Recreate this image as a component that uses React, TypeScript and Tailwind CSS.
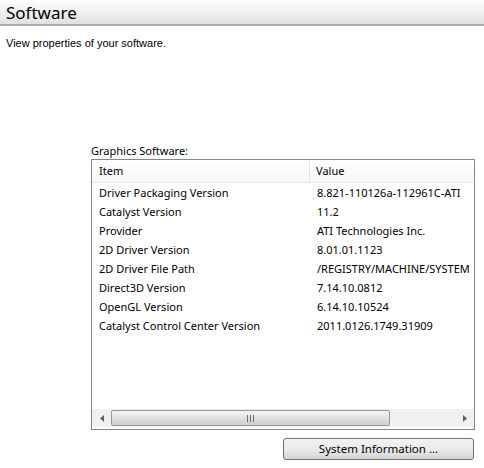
const rows = [
  ["Driver Packaging Version", "8.821-110126a-112961C-ATI"],
  ["Catalyst Version", "11.2"],
  ["Provider", "ATI Technologies Inc."],
  ["2D Driver Version", "8.01.01.1123"],
  ["2D Driver File Path", "/REGISTRY/MACHINE/SYSTEM"],
  ["Direct3D Version", "7.14.10.0812"],
  ["OpenGL Version", "6.14.10.10524"],
  ["Catalyst Control Center Version", "2011.0126.1749.31909"],
];

const ui = { fontFamily: '"Segoe UI", "Noto Sans", sans-serif' };

export default function App() {
  return (
    <div className="w-[484px] h-[468px] bg-white overflow-hidden flex flex-col">
      {/* Title bar */}
      <div className="h-[26px] bg-gradient-to-b from-white to-[#dfe1e3] border-b-2 border-[#a9a9a9] pl-[6px] flex items-center">
        <span className="text-[17px] leading-none text-black" style={ui}>Software</span>
      </div>

      <p className="mt-[10px] pl-[6px] text-[11px] leading-[14px] text-black" style={{ fontFamily: '"Liberation Sans", Arial, sans-serif' }}>
        View properties of your software.
      </p>

      <div className="mt-[94px] ml-[91px] w-[384px] flex flex-col" style={ui}>
        <span className="text-[11px] leading-[14px] text-black mb-[1px]">Graphics Software:</span>

        {/* List view */}
        <div className="h-[271px] border border-[#828790] bg-white flex flex-col">
          <div className="h-[23px] flex border-b border-[#e5e5e5] bg-gradient-to-b from-white to-[#f6f7f8] text-[11px] text-black">
            <div className="w-[218px] pl-[7px] flex items-center border-r border-[#e3e4e6]">Item</div>
            <div className="flex-1 pl-[6px] flex items-center">Value</div>
          </div>
          <div className="flex-1 pt-[1px] overflow-hidden">
            {rows.map(([k, v]) => (
              <div key={k} className="h-[19px] flex items-center text-[11px] text-black whitespace-nowrap">
                <div className="w-[219px] pl-[7px]">{k}</div>
                <div className="flex-1 min-w-0 pl-[6px] overflow-hidden">{v}</div>
              </div>
            ))}
          </div>

          {/* Horizontal scrollbar */}
          <div className="h-[18px] mb-[2px] flex items-center bg-[#f0f0f0]">
            <div className="w-[19px] h-full flex items-center justify-center">
              <svg width="4" height="7" viewBox="0 0 4 7"><path d="M4 0 L0 3.5 L4 7 Z" fill="#606060" /></svg>
            </div>
            <div className="w-[279px] h-[16px] rounded-[2px] border border-[#979797] bg-gradient-to-b from-[#f4f4f4] via-[#e2e2e2] to-[#cfcfcf] flex items-center justify-center">
              <svg width="7" height="7" viewBox="0 0 7 7">
                <path d="M0.5 0 V7 M3.5 0 V7 M6.5 0 V7" stroke="#6b6b6b" strokeWidth="1" />
              </svg>
            </div>
            <div className="flex-1" />
            <div className="w-[19px] h-full flex items-center justify-center">
              <svg width="4" height="7" viewBox="0 0 4 7"><path d="M0 0 L4 3.5 L0 7 Z" fill="#606060" /></svg>
            </div>
          </div>
        </div>

        <div className="flex justify-end mt-[8px] pr-[1px]">
          <button className="w-[191px] h-[22px] rounded-[3px] border border-[#707070] bg-gradient-to-b from-[#f2f2f2] via-[#ebebeb] to-[#d5d5d5] text-[11.5px] leading-none text-black" style={ui}>
            System Information ...
          </button>
        </div>
      </div>
    </div>
  );
}
